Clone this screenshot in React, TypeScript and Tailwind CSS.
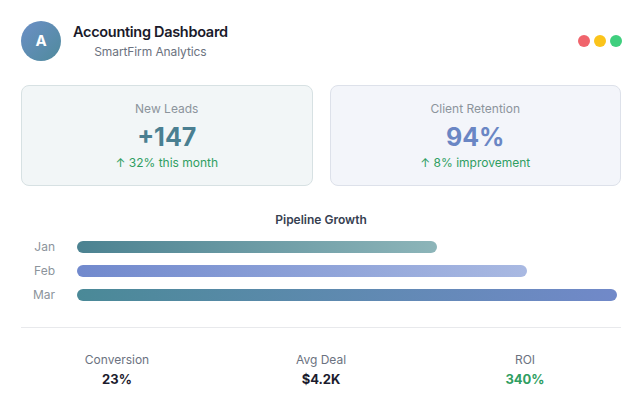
const BARS = [
  { month: 'Jan', pct: 66.7, grad: 'bg-gradient-to-r from-[#4b8291] to-[#8db5b9]' },
  { month: 'Feb', pct: 83.4, grad: 'bg-gradient-to-r from-[#7189cd] to-[#a9b9e2]' },
  { month: 'Mar', pct: 100, grad: 'bg-gradient-to-r from-[#4a8997] to-[#7189c9]' },
]

const STATS = [
  { label: 'Conversion', value: '23%', tone: 'text-[#1c1c2e]' },
  { label: 'Avg Deal', value: '$4.2K', tone: 'text-[#1c1c2e]' },
  { label: 'ROI', value: '340%', tone: 'text-[#2f9e62]' },
]

export default function App() {
  return (
    <div className="min-h-screen w-[642px] bg-white px-[21px] pt-[21px] font-['Inter',sans-serif]">
      {/* header */}
      <div className="flex items-center justify-between">
        <div className="flex items-center gap-3">
          <div className="flex h-10 w-10 items-center justify-center rounded-full bg-gradient-to-br from-[#6b8fc6] to-[#4f8a9c] text-[15px] font-bold text-white">
            A
          </div>
          <div className="flex flex-col items-center">
            <h1 className="text-[14.5px] font-semibold leading-5 tracking-[-0.3px] text-[#1a1a2a]">Accounting Dashboard</h1>
            <p className="mt-[2px] text-[12px] leading-4 tracking-[-0.1px] text-[#6b7280]">SmartFirm Analytics</p>
          </div>
        </div>
        <div className="-mr-[1px] flex gap-1">
          <span className="h-3 w-3 rounded-full bg-[#f0646c]" />
          <span className="h-3 w-3 rounded-full bg-[#fbc41b]" />
          <span className="h-3 w-3 rounded-full bg-[#3fcf7e]" />
        </div>
      </div>

      {/* metric cards */}
      <div className="mt-[24px] grid grid-cols-2 gap-[17px]">
        <div className="flex h-[101px] flex-col items-center justify-center rounded-lg border border-[#d7e1e3] bg-[#f2f6f7]">
          <span className="text-[12px] leading-4 text-[#8c949c]">New Leads</span>
          <span className="mt-[4px] text-[25px] font-bold leading-8 text-[#4a7f91]">+147</span>
          <span className="mt-[2px] text-[12px] leading-4 text-[#2f9e62]">↑ 32% this month</span>
        </div>
        <div className="flex h-[101px] flex-col items-center justify-center rounded-lg border border-[#dde1ea] bg-[#f3f5fa]">
          <span className="text-[12px] leading-4 text-[#8c949c]">Client Retention</span>
          <span className="mt-[4px] text-[25px] font-bold leading-8 text-[#6a86c4]">94%</span>
          <span className="mt-[2px] text-[12px] leading-4 text-[#2f9e62]">↑ 8% improvement</span>
        </div>
      </div>

      {/* pipeline */}
      <h2 className="mt-[26px] text-center text-[12px] font-semibold leading-4 text-[#374151]">Pipeline Growth</h2>
      <div className="mt-[13px] flex flex-col gap-[12px] pr-[4px]">
        {BARS.map((b) => (
          <div key={b.month} className="flex items-center">
            <span className="w-[34px] text-right text-[12px] leading-3 text-[#8c949c]">{b.month}</span>
            <div className="ml-[22px] h-3 flex-1">
              <div className={`h-3 rounded-full ${b.grad}`} style={{ width: `${b.pct}%` }} />
            </div>
          </div>
        ))}
      </div>

      <div className="mt-[26px] h-px bg-[#e8e9ec]" />

      {/* bottom stats */}
      <div className="mx-[-6px] mt-[24px] grid grid-cols-3">
        {STATS.map((s) => (
          <div key={s.label} className="flex flex-col items-center">
            <span className="text-[12px] leading-4 text-[#6b7280]">{s.label}</span>
            <span className={`mt-[3px] text-[13px] font-bold leading-4 ${s.tone}`}>{s.value}</span>
          </div>
        ))}
      </div>
    </div>
  )
}
